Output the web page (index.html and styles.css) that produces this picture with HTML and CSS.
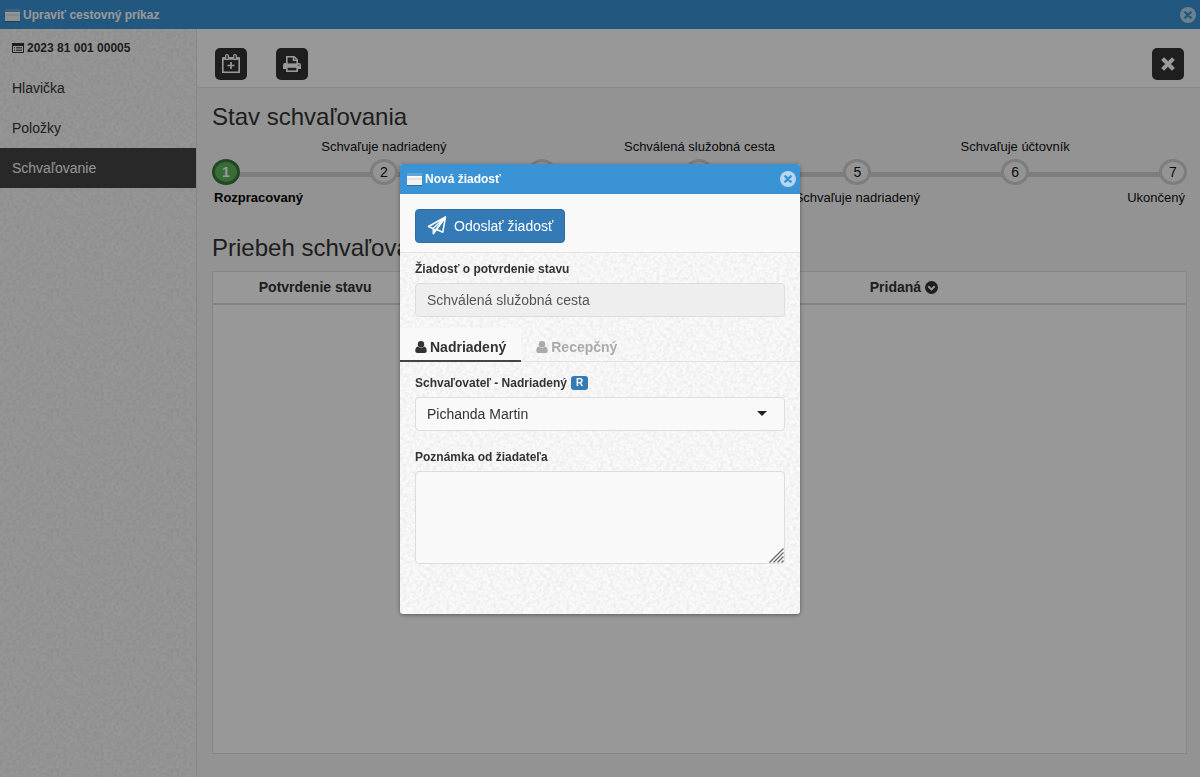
FILE: index.html
```html
<!DOCTYPE html>
<html lang="sk">
<head>
<meta charset="utf-8">
<title>Upraviť cestovný príkaz</title>
<link rel="stylesheet" href="styles.css">
</head>
<body>
<svg class="defs" aria-hidden="true">
  <symbol id="window" viewBox="0 0 15 13">
    <rect width="15" height="13" fill="#f2f2f2"/>
    <rect width="15" height="3" fill="#5ea5da"/>
    <rect y="3" width="15" height="1" fill="#fff"/>
    <rect y="5" width="15" height="2" fill="#e4e4e4"/>
    <rect y="12" width="15" height="1" fill="#2a6f9f"/>
  </symbol>
  <symbol id="circle-x" viewBox="0 0 16 16">
    <circle cx="8" cy="8" r="8" fill="#b5d7ef"/>
    <path d="M5.3 5.3l5.4 5.4M10.7 5.3l-5.4 5.4" stroke="#3a93d5" stroke-width="2.4" stroke-linecap="round"/>
  </symbol>
  <symbol id="user" viewBox="0 0 12 12">
    <path d="M3 5.600C1 6 .3 8 .3 9.800.3 11.200 1.200 12 2.400 12h7.200c1.200 0 2.100-.8 2.100-2.200C11.700 8 11 6 9 5.600a4.200 4.200 0 0 1-6 0z" fill="currentColor"/>
    <circle cx="6" cy="3.200" r="3.200" fill="currentColor"/>
  </symbol>
</svg>

<div class="app">
  <header class="titlebar">
    <svg class="ico-window"><use href="#window"/></svg>
    <h1 class="titlebar-text">Upraviť cestovný príkaz</h1>
    <button class="titlebar-close" aria-label="Zavrieť okno"><svg class="ico-close"><use href="#circle-x"/></svg></button>
  </header>

  <div class="body">
    <nav class="sidebar">
      <div class="sidebar-head">
        <svg class="ico-doc" viewBox="0 0 12 10"><path d="M.5.5h11v9H.5z" fill="none" stroke="#333"/><path d="M0 0h12v3H0z" fill="#333"/><path d="M2 4.500h1M2 6h1M2 7.500h1M4 4.500h6M4 6h6M4 7.500h6" stroke="#333" stroke-width=".7"/></svg>
        <span>2023 81 001 00005</span>
      </div>
      <a class="sidebar-link" href="#hlavicka">Hlavička</a>
      <a class="sidebar-link" href="#polozky">Položky</a>
      <a class="sidebar-link is-active" href="#schvalovanie">Schvaľovanie</a>
    </nav>

    <main class="main">
      <div class="toolbar">
        <button class="tool" aria-label="Nová žiadosť">
          <svg width="18" height="19" viewBox="0 0 18 19" fill="none" stroke="#fff"><path d="M.8 4h16.400v14.200H.8z" stroke-width="1.600"/><path d="M1 4.500h16" stroke-width="2.600"/><path d="M9 8v7M5.500 11.500h7" stroke-width="1.700"/><rect x="3.700" y=".7" width="2.600" height="5" rx="1.300" fill="#333" stroke-width="1.300"/><rect x="11.700" y=".7" width="2.600" height="5" rx="1.300" fill="#333" stroke-width="1.300"/></svg>
        </button>
        <button class="tool" aria-label="Tlačiť">
          <svg width="18" height="16" viewBox="0 0 18 16"><path d="M0 13V9a2 2 0 0 1 2-2h14a2 2 0 0 1 2 2v4z" fill="#fff"/><path d="M3.800 8V.8h7.400l3 3V8" fill="#333" stroke="#fff" stroke-width="1.600"/><path d="M10.500 1v3.300H14" fill="none" stroke="#fff" stroke-width="1.500"/><path d="M3 8h12" stroke="#fff" stroke-width="1.200"/><rect x="3.800" y="11" width="10.400" height="4.200" fill="#333" stroke="#fff" stroke-width="1.600"/><circle cx="15.800" cy="9.300" r=".7" fill="#333"/></svg>
        </button>
        <button class="tool tool-end" aria-label="Zavrieť">
          <svg width="14" height="14" viewBox="0 0 14 14"><path d="M3 3l8 8M11 3l-8 8" stroke="#fff" stroke-width="4" stroke-linecap="square"/></svg>
        </button>
      </div>

      <div class="content">
        <h2 class="heading">Stav schvaľovania</h2>
        <ol class="steps">
          <li class="step is-done"><span class="dot">1</span><span class="label below">Rozpracovaný</span></li>
          <li class="step"><span class="label">Schvaľuje nadriadený</span><span class="dot">2</span></li>
          <li class="step"><span class="dot">3</span></li>
          <li class="step"><span class="label">Schválená služobná cesta</span><span class="dot">4</span></li>
          <li class="step"><span class="dot">5</span><span class="label below">Schvaľuje nadriadený</span></li>
          <li class="step"><span class="label">Schvaľuje účtovník</span><span class="dot">6</span></li>
          <li class="step"><span class="dot">7</span><span class="label below">Ukončený</span></li>
        </ol>

        <h2 class="heading">Priebeh schvaľovania</h2>
        <div class="grid-panel">
          <table class="history">
            <thead>
              <tr>
                <th class="col-state">Potvrdenie stavu</th>
                <th class="col-mid"></th>
                <th>Pridaná <svg class="ico-sort" viewBox="0 0 12 12"><circle cx="6" cy="6" r="6" fill="#333"/><path d="M3 4.800l3 3 3-3" fill="none" stroke="#fff" stroke-width="1.800"/></svg></th>
              </tr>
            </thead>
          </table>
        </div>
      </div>
    </main>
  </div>
</div>

<div class="overlay">
  <section class="modal" role="dialog" aria-labelledby="modal-title">
    <header class="titlebar modal-titlebar">
      <svg class="ico-window"><use href="#window"/></svg>
      <h2 class="titlebar-text" id="modal-title">Nová žiadosť</h2>
      <button class="titlebar-close" aria-label="Zavrieť žiadosť"><svg class="ico-close"><use href="#circle-x"/></svg></button>
    </header>
    <div class="modal-toolbar">
      <button class="send">
        <svg width="20" height="19" viewBox="0 0 20 19" fill="none" stroke="#fff" stroke-width="1.500" stroke-linejoin="round"><path d="M18.500 1L1.500 10.500l4.500 2L18.500 1l-2.700 15.200-6.300-2.700z"/><path d="M6.300 12.600v5.200l3.200-4.200" fill="#fff"/><path d="M18.500 1L9 13.500"/></svg>
        <span>Odoslať žiadosť</span>
      </button>
    </div>
    <form class="form">
      <div class="field">
        <label class="field-label" for="state">Žiadosť o potvrdenie stavu</label>
        <input class="control" id="state" type="text" value="Schválená služobná cesta" disabled>
      </div>
      <div class="tabs" role="tablist">
        <button class="tab is-active" type="button" role="tab"><svg class="ico-user"><use href="#user"/></svg>Nadriadený</button>
        <button class="tab" type="button" role="tab"><svg class="ico-user"><use href="#user"/></svg>Recepčný</button>
      </div>
      <div class="field">
        <label class="field-label" for="approver">Schvaľovateľ - Nadriadený <span class="badge">R</span></label>
        <div class="control-wrap">
          <select class="control" id="approver"><option>Pichanda Martin</option></select>
          <svg class="caret" viewBox="0 0 10 5"><path d="M0 0h10L5 5z" fill="#222"/></svg>
        </div>
      </div>
      <div class="field field-note">
        <label class="field-label" for="note">Poznámka od žiadateľa</label>
        <div class="control-wrap">
          <textarea class="control note" id="note"></textarea>
          <svg class="grip" viewBox="0 0 15 15"><path d="M.5 14.500l14-14M4.500 14.500l10-10M8.500 14.500l6-6M12.500 14.500l2-2" stroke="#666" stroke-width="1.200"/></svg>
        </div>
      </div>
    </form>
  </section>
</div>
</body>
</html>
```

FILE: styles.css
```css
:root {
  --weave: url("data:image/svg+xml,%3Csvg xmlns='http://www.w3.org/2000/svg' width='120' height='120'%3E%3Cfilter id='n'%3E%3CfeTurbulence type='fractalNoise' baseFrequency='.3' numOctaves='2' stitchTiles='stitch'/%3E%3CfeColorMatrix values='0 0 0 0 0 0 0 0 0 0 0 0 0 0 0 .12 0 0 0 -.04'/%3E%3C/filter%3E%3Crect width='120' height='120' filter='url(%23n)'/%3E%3C/svg%3E");
}

* { box-sizing: border-box; }

body {
  margin: 0;
  font: 14px/20px "Liberation Sans", Arial, sans-serif;
  color: #333;
}

button, input, select, textarea { font: inherit; color: inherit; }
button { padding: 0; border: 0; background: none; }
svg { flex: none; }
.defs { position: absolute; width: 0; height: 0; }

.app { display: flex; flex-direction: column; min-height: 100vh; }

.titlebar {
  display: flex;
  align-items: center;
  gap: 3px;
  height: 29px;
  padding: 0 4px 0 5px;
  background: #3a93d5;
  color: #fff;
}
.titlebar-text { margin: 0; font-size: 12px; line-height: 16px; font-weight: bold; }
.titlebar-close { display: flex; margin-left: auto; }
.ico-window { width: 15px; height: 13px; margin-top: 2px; }
.ico-close { width: 16px; height: 16px; }

.body { display: flex; flex: 1; }

.sidebar {
  width: 197px;
  flex: none;
  border-right: 1px solid #e0e0e0;
  background: #fafafa var(--weave);
}
.sidebar-head {
  display: flex;
  align-items: center;
  gap: 3px;
  height: 39px;
  padding: 0 12px 2px;
  font-size: 12px;
  font-weight: bold;
}
.ico-doc { width: 12px; height: 10px; }
.sidebar-link {
  display: block;
  height: 40px;
  padding: 10px 12px;
  color: #333;
  text-decoration: none;
}
.sidebar-link.is-active { background: #444; color: #f7f7f7; }

.main { display: flex; flex: 1; flex-direction: column; min-width: 0; background: #f5f5f5; }

.toolbar {
  display: flex;
  align-items: center;
  gap: 29px;
  height: 59px;
  padding: 11px 16px 0 18px;
  border-bottom: 1px solid #e2e2e2;
  background: #fdfdfd;
}
.tool {
  display: grid;
  place-items: center;
  width: 32px;
  height: 32px;
  border-radius: 5px;
  background: #333;
}
.tool-end { margin-left: auto; }

.content { display: flex; flex: 1; flex-direction: column; padding: 16px 13px 23px 15px; }

.heading { margin: 0; font-size: 24px; line-height: 26px; font-weight: normal; }

.steps {
  position: relative;
  display: flex;
  justify-content: space-between;
  margin: 7px 0 27px;
  padding: 0;
  list-style: none;
  color: #111;
}
.steps::before {
  content: "";
  position: absolute;
  inset: 35px 14px auto;
  height: 5px;
  background: #d0d0d0;
}
.step {
  position: relative;
  display: grid;
  grid-template: 22px 26px 23px / 28px;
  justify-content: center;
  justify-items: center;
}
.dot {
  grid-area: 2 / 1;
  width: 28px;
  height: 26px;
  border: 3px solid #d0d0d0;
  border-radius: 50%;
  background: #f7f7f7;
  line-height: 20px;
  text-align: center;
}
.label { grid-area: 1 / 1; line-height: 20px; font-size: 13px; white-space: nowrap; }
.label.below { grid-area: 3 / 1; align-self: end; }
.step:first-child .label { justify-self: start; padding-left: 2px; }
.step:last-child .label { justify-self: end; padding-right: 2px; }
.is-done .dot { border-color: #3c763d; background: #5cb85c; color: #fff; font-weight: bold; }
.is-done .label { color: #000; font-weight: bold; }

.grid-panel { flex: 1; margin-top: 10px; border: 1px solid #e0e0e0; background: #fdfdfd; }
.history { width: 100%; border-collapse: collapse; table-layout: fixed; }
.history th { height: 32px; padding: 0 0 1px; border-bottom: 2px solid #ddd; }
.col-state { width: 21%; }
.col-mid { width: 21%; }
.ico-sort { width: 13px; height: 13px; vertical-align: -2px; }

.overlay {
  position: fixed;
  inset: 0;
  display: grid;
  place-items: center;
  background: rgba(0, 0, 0, .4);
}
.modal {
  width: 400px;
  overflow: hidden;
  border-radius: 3px;
  background: #fafafa var(--weave);
  box-shadow: 0 1px 4px rgba(0, 0, 0, .4);
}
.modal-titlebar { height: 30px; padding: 0 4px 0 7px; }
.modal-toolbar { padding: 15px 15px 9px; border-bottom: 1px solid #e4e4e4; background: #f9f9f9; }
.send {
  display: flex;
  align-items: center;
  gap: 7px;
  height: 34px;
  padding: 0 11px;
  border: 1px solid #2e6da4;
  border-radius: 4px;
  background: #337ab7;
  color: #fff;
}

.field { padding: 8px 15px 0; }
.field-label { display: flex; align-items: center; gap: 4px; font-size: 12px; font-weight: bold; line-height: 16px; }
.control-wrap { position: relative; }
.control {
  display: block;
  width: 100%;
  height: 34px;
  margin-top: 6px;
  padding: 6px 11px;
  border: 1px solid #ddd;
  border-radius: 4px;
  background: #f9f9f9;
  appearance: none;
}
.control:disabled { background: #eee; color: #555; opacity: 1; }
.note { height: 93px; resize: none; }
.caret { position: absolute; right: 18px; top: 14px; width: 10px; height: 5px; }
.grip { position: absolute; right: 1px; bottom: 1px; width: 15px; height: 15px; }
.badge {
  padding: 0 5px;
  border-radius: 3px;
  background: #337ab7;
  color: #fff;
  font-size: 10px;
  line-height: 14px;
}

.tabs { display: flex; margin: 11px 0 5px; border-bottom: 1px solid #e4e4e4; }
.tab {
  display: flex;
  align-items: center;
  gap: 3px;
  height: 34px;
  padding: 7px 15px 0;
  border-bottom: 2px solid transparent;
  margin-bottom: -1px;
  color: #aaa;
  font-weight: bold;
}
.tab.is-active { border-color: #444; background: #f9f9f9; color: #333; }
.ico-user { width: 12px; height: 12px; }
.field-note { padding-top: 18px; padding-bottom: 50px; }
```
